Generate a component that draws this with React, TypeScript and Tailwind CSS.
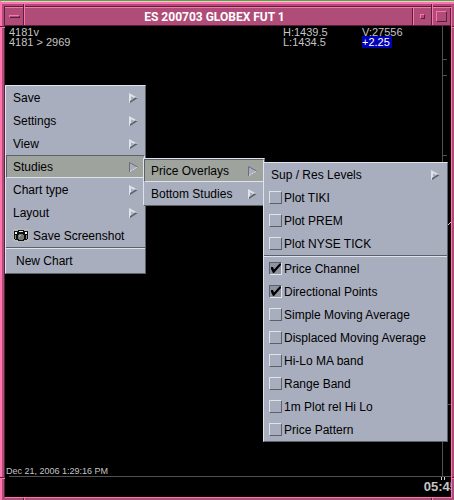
import type { ReactNode } from "react";

type Item = { label: string; active?: boolean };

const mainItems: Item[] = [
  { label: "Save" },
  { label: "Settings" },
  { label: "View" },
  { label: "Studies", active: true },
  { label: "Chart type" },
  { label: "Layout" },
];

const studyItems: Item[] = [
  { label: "Price Overlays", active: true },
  { label: "Bottom Studies" },
];

const plots = ["Plot TIKI", "Plot PREM", "Plot NYSE TICK"];

const overlays = [
  { label: "Price Channel", on: true },
  { label: "Directional Points", on: true },
  { label: "Simple Moving Average", on: false },
  { label: "Displaced Moving Average", on: false },
  { label: "Hi-Lo MA band", on: false },
  { label: "Range Band", on: false },
  { label: "1m Plot rel Hi Lo", on: false },
  { label: "Price Pattern", on: false },
];

const Arrow = ({ active }: { active?: boolean }) =>
  active ? (
    <svg width="9" height="10" viewBox="0 0 9 10">
      <path d="M0 0 L9 5 L0 10 Z" fill="#a8aebe" />
      <path d="M.5 10 V.5 L8.5 5" fill="none" stroke="#6a6e78" />
      <path d="M1 9.5 L8.5 5" fill="none" stroke="#dfe3ea" strokeDasharray="2 1" />
    </svg>
  ) : (
    <svg width="9" height="10" viewBox="0 0 9 10">
      <path d="M0 0 L9 5 L0 10 Z" fill="#dfe3ea" />
      <path d="M1 10 L9 5 L6 4.6 L1 8 Z" fill="#5c6068" />
      <path d="M2 3.2 L5.6 5 L2 7.4 Z" fill="#a8aebe" />
    </svg>
  );

const Camera = () => (
  <svg width="16" height="13" viewBox="0 0 16 13" shapeRendering="crispEdges">
    <rect width="16" height="13" fill="#b5b8b4" />
    <path d="M1 2h4V1h6v1h4v8h-1v1h-3v1H5v-1H2v-1H1z" fill="#111" />
    <path d="M2 3h2v2H2zM12 3h2v2h-2zM6 2h4v1H6z" fill="#f0f0f0" />
    <path d="M2 6h1v4H2zM13 6h1v4h-1z" fill="#888" />
    <path d="M6 5h4v1h1v4h-1v1H6v-1H5V6h1z" fill="#777" />
    <path d="M6 6h2v1H7v1H6z" fill="#7fc4c4" />
  </svg>
);

const Menu = ({ className, children }: { className: string; children: ReactNode }) => (
  <div
    className={`absolute flex flex-col border border-t-[#dfe3ea] border-l-[#dfe3ea] border-r-[#5c6068] border-b-[#5c6068] bg-[#a8aebe] text-black ${className}`}
  >
    {children}
  </div>
);

const MenuItem = ({ label, active }: Item) => (
  <button
    className={`flex h-[23px] w-full items-center justify-between border pr-1.5 pl-1.5 text-left ${
      active
        ? "border-t-[#5c6068] border-l-[#5c6068] border-r-[#dfe3ea] border-b-[#dfe3ea] bg-[#9fa39e]"
        : "border-transparent"
    }`}
  >
    {label}
    <Arrow active={active} />
  </button>
);

const CheckItem = ({ label, on }: { label: string; on?: boolean }) => (
  <label className="flex h-[23px] items-center gap-0.5 pl-[5px]">
    <span className="relative flex">
      <input
        type="checkbox"
        defaultChecked={on}
        className="peer size-[13px] appearance-none border border-t-[#dfe3ea] border-l-[#dfe3ea] border-r-[#5c6068] border-b-[#5c6068] checked:border-t-[#5c6068] checked:border-l-[#5c6068] checked:border-r-[#dfe3ea] checked:border-b-[#dfe3ea] checked:bg-[#8f93a2]"
      />
      <svg
        className="pointer-events-none absolute inset-0 hidden peer-checked:block"
        width="13"
        height="13"
        viewBox="0 0 13 13"
      >
        <path d="M2 5 L4 5 L5 7.5 L10.5 1.5 L12 1.5 L12 3 L5 11 L4 11 L2 7 Z" fill="#000" />
      </svg>
    </span>
    {label}
  </label>
);

const Separator = () => (
  <div className="h-0.5 border-t border-b border-t-[#5c6068] border-b-[#dfe3ea]" />
);

const TitleBar = () => (
  <header className="flex h-[19px] items-stretch border-t border-b border-t-[#ff74ac] border-b-[#5c1f3b] bg-[#b04c78]">
    <button
      aria-label="Window menu"
      className="flex w-[19px] items-center justify-center border-r border-r-[#5c1f3b]"
    >
      <span className="h-[3px] w-[11px] border border-t-[#ff74ac] border-l-[#ff74ac] border-r-[#5c1f3b] border-b-[#5c1f3b]" />
    </button>
    <h1 className="flex flex-1 items-center justify-center border-l border-r border-l-[#ff74ac] border-r-[#5c1f3b] pr-2 font-[Roboto,sans-serif] text-xs font-bold text-white">
      ES 200703 GLOBEX FUT 1
    </h1>
    <button
      aria-label="Minimize"
      className="flex w-[19px] items-center justify-center border-l border-r border-l-[#ff74ac] border-r-[#5c1f3b]"
    >
      <span className="size-[5px] border border-t-[#ff74ac] border-l-[#ff74ac] border-r-[#5c1f3b] border-b-[#5c1f3b]" />
    </button>
    <button
      aria-label="Maximize"
      className="flex w-[19px] items-center justify-center border-l border-r border-l-[#ff74ac] border-r-[#5c1f3b]"
    >
      <span className="size-[11px] border border-t-[#ff74ac] border-l-[#ff74ac] border-r-[#5c1f3b] border-b-[#5c1f3b]" />
    </button>
  </header>
);

// Resize corner marks cut into the window frame
const FrameNotches = () => (
  <div aria-hidden="true" className="pointer-events-none">
    <i className="absolute top-[3px] left-[23px] h-1 w-0.5 border-l border-r border-l-[#5c1f3b] border-r-[#ff74ac]" />
    <i className="absolute top-[3px] right-[21px] h-1 w-0.5 border-l border-r border-l-[#5c1f3b] border-r-[#ff74ac]" />
    <i className="absolute bottom-0 left-[23px] h-0.5 w-0.5 border-l border-r border-l-[#5c1f3b] border-r-[#ff74ac]" />
    <i className="absolute right-[21px] bottom-0 h-0.5 w-0.5 border-l border-r border-l-[#5c1f3b] border-r-[#ff74ac]" />
    <i className="absolute top-[25px] left-0 h-0.5 w-[5px] border-t border-b border-t-[#5c1f3b] border-b-[#ff74ac]" />
    <i className="absolute top-[25px] right-0 h-0.5 w-0.5 border-t border-b border-t-[#5c1f3b] border-b-[#ff74ac]" />
    <i className="absolute bottom-[21px] left-0 h-0.5 w-[5px] border-t border-b border-t-[#5c1f3b] border-b-[#ff74ac]" />
    <i className="absolute right-0 bottom-[21px] h-0.5 w-0.5 border-t border-b border-t-[#5c1f3b] border-b-[#ff74ac]" />
  </div>
);

const PriceAxis = () => (
  <svg
    className="absolute top-0 right-0 h-full w-[10px]"
    fill="none"
    shapeRendering="crispEdges"
  >
    <path
      d="M1.5 0V450M1 33.5h5M1 49.5h5M1 129.5h5M6 378.5h4"
      stroke="#505050"
    />
    <path d="M7 198.5h1M8 197.5h1M9 196.5h1M.5 451v3M3.5 451v3" stroke="#d0d0d0" />
  </svg>
);

const App = () => {
  return (
    <main className="relative flex min-h-screen flex-col border-t border-[#6e9a48] bg-[#b04c78] font-['Liberation_Sans',sans-serif] text-xs">
      <div className="flex flex-1 flex-col border-t border-l-2 border-t-[#d8d4d0] border-l-[#ff74ac]">
        <div className="flex flex-1 flex-col border-t-2 border-t-[#ff74ac] pt-0.5 pr-0.5 pb-0.5 pl-0.5">
          <div className="flex flex-1 flex-col border border-t-[#5c1f3b] border-r-[#ff74ac] border-b-[#ff74ac] border-l-[#5c1f3b]">
            <TitleBar />
            <section className="relative flex flex-1 flex-col justify-between overflow-hidden bg-black text-[#c4c4c4]">
              <PriceAxis />
              <div className="grid grid-cols-[274px_79px_1fr] pt-px pl-1 text-[11px] leading-[10px]">
                <span>4181v</span>
                <span>H:1439.5</span>
                <span>V:27556</span>
                <span>4181 &gt; 2969</span>
                <span>L:1434.5</span>
                <span>
                  <mark className="bg-[#0000b4] pr-0.5 text-white">+2.25</mark>
                </span>
              </div>
              <footer>
                <time className="block pl-px text-[9px] leading-[10px]">
                  Dec 21, 2006 1:29:16 PM
                </time>
                <div className="ml-1 border-t border-[#505050]" />
                <div className="flex h-5 justify-end text-[13px] leading-5 font-bold">
                  <span className="-mr-1.5">05:45</span>
                </div>
              </footer>

              <Menu className="top-[59px] left-0 w-[141px]">
                {mainItems.map((item) => (
                  <MenuItem key={item.label} {...item} />
                ))}
                <button className="flex h-[23px] items-center gap-1 pl-[7px]">
                  <Camera />
                  Save Screenshot
                </button>
                <Separator />
                <button className="flex h-6 items-center pl-2.5">New Chart</button>
              </Menu>
              <Menu className="top-[132px] left-[138px] w-[122px]">
                {studyItems.map((item) => (
                  <MenuItem key={item.label} {...item} />
                ))}
              </Menu>
              <Menu className="top-[136px] left-[258px] w-[185px]">
                <MenuItem label="Sup / Res Levels" />
                {plots.map((label) => (
                  <CheckItem key={label} label={label} />
                ))}
                <Separator />
                {overlays.map((item) => (
                  <CheckItem key={item.label} {...item} />
                ))}
              </Menu>
            </section>
          </div>
        </div>
      </div>
      <FrameNotches />
    </main>
  );
};

export default App;
